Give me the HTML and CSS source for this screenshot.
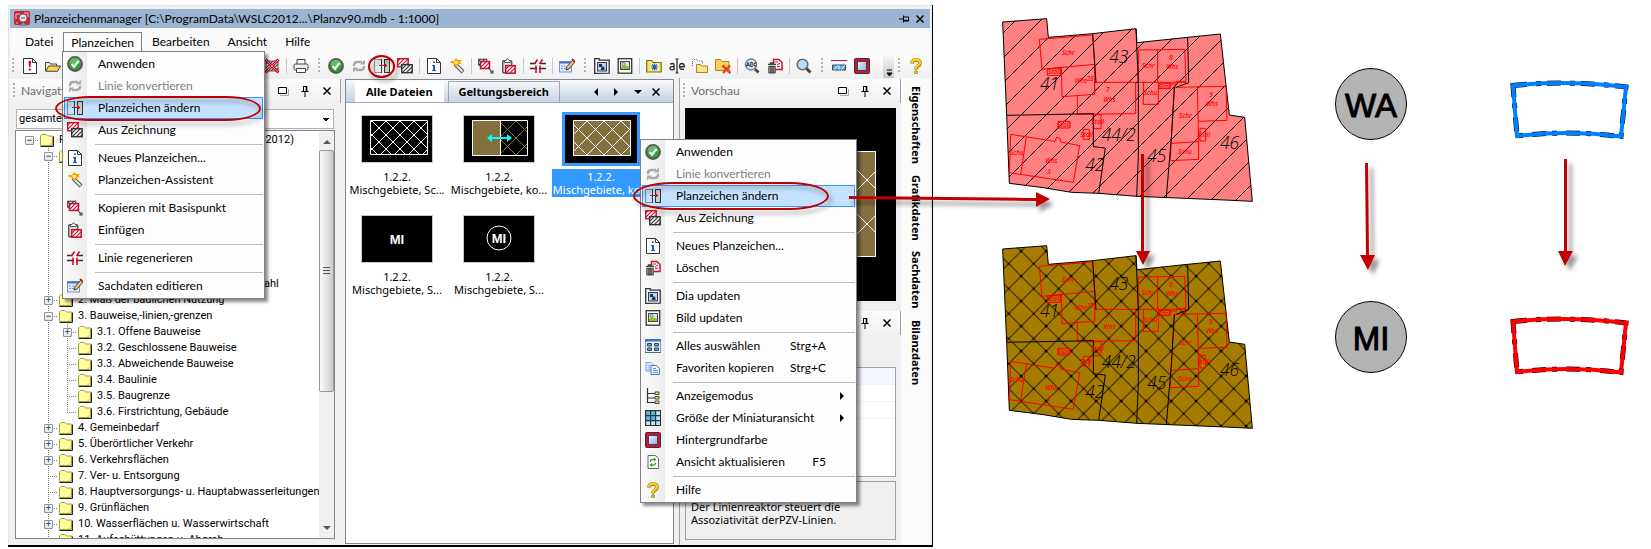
FILE: index.html
```html
<!DOCTYPE html>
<html lang="de">
<head>
<meta charset="utf-8">
<title>Planzeichenmanager</title>
<link rel="stylesheet" href="styles.css">
</head>
<body>
<svg class="defs" aria-hidden="true">
<defs>
<linearGradient id="g-blue" x1="0" y1="0" x2="1" y2="1"><stop offset="0" stop-color="#e8f4ff"/><stop offset="1" stop-color="#7fb2e8"/></linearGradient>
<pattern id="p-red" width="4" height="4" patternUnits="userSpaceOnUse"><rect width="4" height="4" fill="#fff"/><path d="M-1 1L1-1M0 4L4 0M3 5L5 3" stroke="#c8102e" stroke-width="1.200"/></pattern>
<pattern id="p-dark" width="4" height="4" patternUnits="userSpaceOnUse"><rect width="4" height="4" fill="#fff"/><path d="M-1 1L1-1M0 4L4 0M3 5L5 3" stroke="#333" stroke-width="1.200"/></pattern>
<filter id="shadow" x="-100%" y="-30%" width="400%" height="180%"><feDropShadow dx="5" dy="5" stdDeviation="2" flood-color="#000" flood-opacity=".4"/></filter>
<filter id="shadow-h" filterUnits="userSpaceOnUse" x="-5" y="-5" width="230" height="50"><feDropShadow dx="4" dy="5" stdDeviation="2" flood-color="#000" flood-opacity=".4"/></filter>
</defs>
<symbol id="i-check" viewBox="0 0 16 16"><circle cx="8" cy="8" r="7" fill="#2f9e35" stroke="#555" stroke-width="1.8"/><path d="M2.5 7A5.5 5.5 0 0 1 13.500 7Q8 9 2.500 7" fill="#7fd083" opacity=".6"/><path d="M4.500 8l2.500 2.700L11.500 5" fill="none" stroke="#fff" stroke-width="2.200"/></symbol>
<symbol id="i-sync" viewBox="0 0 16 16"><g fill="none" stroke="#aaa" stroke-width="2.400"><path d="M3 8V6.500Q3.500 4 6.500 4H11"/><path d="M13 8v1.500Q12.500 12 9.500 12H5"/></g><path d="M9 6.500h5V1.500zM7 9.500H2v5z" fill="#aaa"/></symbol>
<symbol id="i-change" viewBox="0 0 16 16"><path d="M6.500 1.500H.5v13h6" fill="none" stroke="#333" stroke-dasharray="1 1"/><path d="M7.500 1v14" stroke="#333"/><rect x="10.500" y="1.500" width="5" height="13" fill="#ccc" stroke="#333"/><path d="M5 7.500h7" stroke="#c8102e"/><path d="M11 5.500L13.500 7.500 11 9.500z" fill="#c8102e"/></symbol>
<symbol id="i-copyhatch" viewBox="0 0 16 16"><rect x=".7" y=".7" width="10.500" height="8" fill="url(#p-red)" stroke="#c8102e" stroke-width="1.400"/><rect x="4.700" y="6.700" width="10.500" height="8" fill="url(#p-dark)" stroke="#333" stroke-width="1.400"/></symbol>
<symbol id="i-info" viewBox="0 0 16 16"><path d="M1.500.5h9l4 4v11h-13z" fill="#fff" stroke="#333"/><path d="M10.500.5v4h4" fill="none" stroke="#333"/><path d="M7 3.500h2V5H7zM6 7h3v5h1v1H6v-1h1V8H6z" fill="#1f5fc8"/></symbol>
<symbol id="i-new" viewBox="0 0 16 16"><path d="M1.500.5h9l4 4v11h-13z" fill="#fff" stroke="#333"/><path d="M10.500.5v4h4" fill="none" stroke="#333"/><path d="M6.500 3h2.500l-.5 6H7zM6.800 10.500h2v2h-2z" fill="#d00020"/></symbol>
<symbol id="i-wand" viewBox="0 0 16 16"><path d="M6 6l8 8" stroke="#555" stroke-width="4"/><path d="M6.500 6.500L13.500 13.500" stroke="#eed" stroke-width="2"/><path d="M1 3h4L7 0l2 2h4l-2 2.500 3 .5-4 1-2 3-2-3-4-1z" fill="#f8a400"/><path d="M5 3h4v3H6z" fill="#ffe070"/></symbol>
<symbol id="i-base" viewBox="0 0 16 16"><rect x=".7" y="1.200" width="8" height="6" fill="url(#p-dark)" stroke="#333"/><rect x="2.500" y="3.500" width="9" height="7" fill="url(#p-red)" stroke="#c8102e" stroke-width="1.500"/><path d="M10.500 10l3 3.500" stroke="#333"/><rect x="13" y="13" width="2" height="2" fill="#fff" stroke="#333"/></symbol>
<symbol id="i-paste" viewBox="0 0 16 16"><rect x="1.700" y="2.700" width="9" height="12" rx="1" fill="#ddd" stroke="#555" stroke-width="1.400"/><path d="M3.500 4.500V2.500H5A1.400 1.400 0 0 1 8 2.500h1.200v2z" fill="#fff" stroke="#555"/><rect x="4.700" y="7.700" width="9.500" height="7.500" fill="url(#p-red)" stroke="#c8102e" stroke-width="1.500"/></symbol>
<symbol id="i-regen" viewBox="0 0 16 16"><path d="M0 5.500h16M0 10.500h16" stroke="#333" stroke-width="1.300"/><path d="M5.500 4h5v3h-5zM4.500 9h1v3h-1zM7 9h2v3H7zM11 9h1v3h-1z" fill="#fff"/><path d="M4.500 6L7.500 1.500M9.500 6L12.500 1.500M4 10.500h3M9 10.500h3M6 7.500v7.500M10 7.500v7.500" stroke="#d00020" stroke-width="1.500"/></symbol>
<symbol id="i-edit" viewBox="0 0 16 16"><rect x=".5" y="3.500" width="12" height="10.500" fill="#dfeaff" stroke="#7a90c8"/><path d="M.5 3.500h12v2H.5z" fill="#4a70c8"/><path d="M2 8h5M2 10.500h5" stroke="#6f92dd" stroke-dasharray="2 1"/><path d="M7 12l1-3.500L14 2l2 2-6 7z" fill="#f0c070" stroke="#444"/><path d="M13 1l2.500 2.500" stroke="#a33" stroke-width="2"/></symbol>
<symbol id="i-trash" viewBox="0 0 16 16"><path d="M6.500 6V1.500H12l3 3v7H9" fill="#fff" stroke="#c8102e" stroke-width="1.500"/><path d="M8 4h3M10 7l3-2M10 9l3-1" stroke="#c8102e"/><path d="M1 6.500h8M3.500 6V5h3v1" fill="none" stroke="#444" stroke-width="1.500"/><path d="M1.800 8.500h6.500v6.500H1.800z" fill="#999" stroke="#444"/><path d="M4 9v6M6 9v6" stroke="#333"/></symbol>
<symbol id="i-dia" viewBox="0 0 16 16"><path d="M.7 15.300V.7h4.500v1.500h10v13z" fill="#f8f8f8" stroke="#333" stroke-width="1.300"/><rect x="3.500" y="4.500" width="9" height="8.500" fill="#b5d4f5" stroke="#335"/><path d="M5 6h3v3H5zM7 12V10l2-2 1.500 2v2z" fill="#234"/></symbol>
<symbol id="i-bild" viewBox="0 0 16 16"><rect x="1.200" y=".7" width="13.500" height="14.500" fill="#fff" stroke="#333" stroke-width="1.300"/><rect x="3.500" y="3.500" width="9" height="8" fill="#cfe6f8" stroke="#444"/><path d="M4 11V9q4-3 8 0v2z" fill="#8cc020"/><circle cx="6.500" cy="6" r="1.500" fill="#f5e55c" stroke="#555" stroke-width=".7"/></symbol>
<symbol id="i-all" viewBox="0 0 16 16"><rect x=".5" y="1.500" width="15" height="13" fill="#eaf2ff" stroke="#7a96d8"/><path d="M0 1h16v2.500H0z" fill="#3f6ee0"/><path d="M0 14h16v1H0z" fill="#567"/><g fill="#7fa2c8" stroke="#345"><path d="M2.500 5.500h4v2.500h-4zM9.500 5.500h4v2.500h-4zM2.500 10h4v2.500h-4zM9.500 10h4v2.500h-4z"/></g></symbol>
<symbol id="i-copy" viewBox="0 0 16 16"><path d="M1 2.500h5l3 3v5.500H1z" fill="#eaf2ff" stroke="#7f9fd8"/><path d="M2.500 5h3M2.500 7h4M2.500 9h3" stroke="#88a8e0"/><path d="M6 5.500h5.500l3 3v6H6z" fill="#eaf2ff" stroke="#4f78c8"/><path d="M8 8.500h3M8 10.500h5M8 12.500h5" stroke="#6f92d8"/></symbol>
<symbol id="i-mode" viewBox="0 0 16 16"><path d="M2.500 0v14.500h8M2.500 5.500h8M2.500 10h8" fill="none" stroke="#333" stroke-width="1.200"/><path d="M10 4h4v2.500h-4zM10 8.500h4V11h-4zM10 13h4v2.500h-4z" fill="#ffe87a" stroke="#444"/></symbol>
<symbol id="i-grid" viewBox="0 0 16 16"><path d="M0 0h16v16H0z" fill="#333"/><path d="M1.200 1.200h3.800V5H1.200zM6.200 1.200H10V5H6.200zM1.200 6.200H5V10H1.200zM6.200 6.200H10V10H6.200z" fill="#53b9e8"/><path d="M11.200 1.200H15V5h-3.800zM11.200 6.200H15V10h-3.800zM1.200 11.200H5V15H1.200zM6.200 11.200H10V15H6.200zM11.200 11.200H15V15h-3.800z" fill="#b9e3f8"/></symbol>
<symbol id="i-bg" viewBox="0 0 16 16"><rect x=".5" y=".5" width="15" height="15" rx="1" fill="#d0103a" stroke="#333"/><rect x="3.500" y="3.500" width="9" height="9" fill="url(#g-blue)" stroke="#444"/></symbol>
<symbol id="i-refresh" viewBox="0 0 16 16"><path d="M3 1.500h7.500l3 3v10H3z" fill="#fff" stroke="#667"/><path d="M5.500 8V7q0-1.500 2-1.500h2M10.500 8.500v1q0 1.500-2 1.500h-2" fill="none" stroke="#3f9a28" stroke-width="1.300"/><path d="M9 3.500v4l2.500-2zM7 9v4l-2.500-2z" fill="#3f9a28"/></symbol>
<symbol id="i-help" viewBox="0 0 16 16"><path d="M4 5.500Q4 2 8 2t4 3q0 1.800-2 3T8 11.500" fill="none" stroke="#8a6d10" stroke-width="3.600"/><path d="M4 5Q4 1.700 8 1.700t4 3q0 1.800-2.200 3T7.800 11" fill="none" stroke="#fccb1a" stroke-width="2.400"/><circle cx="8" cy="14.300" r="1.600" fill="#fccb1a" stroke="#8a6d10" stroke-width=".8"/></symbol>
<symbol id="i-open" viewBox="0 0 16 16"><path d="M.5 13V4.500h4l1 1.500h6v2" fill="#fff2b0" stroke="#444"/><path d="M.7 13.300l3-5.300H15.500l-3 5.300z" fill="#fbd252" stroke="#444"/></symbol>
<symbol id="i-del" viewBox="0 0 16 16"><rect x="2" y="3" width="12" height="10" fill="url(#p-dark)" stroke="#555"/><path d="M1.500 1.500l13 13M14.500 1.500l-13 13" stroke="#c8102e" stroke-width="3"/><path d="M1.500 1.500l13 13M14.500 1.500l-13 13" stroke="#ee8a96" stroke-width="1"/></symbol>
<symbol id="i-print" viewBox="0 0 16 16"><path d="M4 6V1.500h8V6" fill="#fff" stroke="#444"/><rect x="1" y="6" width="14" height="6" rx="1.500" fill="#eee" stroke="#444"/><path d="M3.500 10.500h9v4h-9z" fill="#fff" stroke="#444"/></symbol>
<symbol id="i-fnew" viewBox="0 0 16 16"><path d="M.7 14V2.500h5l1.500 2h8V14z" fill="#fbe36a" stroke="#806a10" stroke-width="1.200"/><path d="M4.500 5.500h8v7h-8z" fill="#fff6b5"/><path d="M8.500 5.500v7M5 9h7M6 6.500l5 5M11 6.500l-5 5" stroke="#1f5fc8" stroke-width="1.200"/></symbol>
<symbol id="i-rename" viewBox="0 0 16 16"><path d="M8 1v14M6.500 1h3M6.500 15h3" stroke="#222" stroke-width="1.200"/><g fill="none" stroke="#333" stroke-width="1.400"><path d="M1 6q4-1.500 4 1v5M5 8.500q-4-.3-4 1.800t4 1"/><path d="M10.500 8.800h4.800q0-3.300-2.400-3.300t-2.400 3q0 3.500 4.500 2.800"/></g></symbol>
<symbol id="i-fmove" viewBox="0 0 16 16"><path d="M.5 8V1.500h4l1 1.500h5v3" fill="none" stroke="#666" stroke-dasharray="1 1"/><path d="M4.500 14.500V6.500h4l1 1.500h6v6.500z" fill="#fbe08a" stroke="#a8842a"/></symbol>
<symbol id="i-fdel" viewBox="0 0 16 16"><path d="M.5 12.500V1.500h5l1.500 2h7v9z" fill="#fbd05a" stroke="#b08420"/><path d="M7.500 7.500l8 7.500M15 7.500l-7 7.500" stroke="#e8401c" stroke-width="2.400"/></symbol>
<symbol id="i-abc" viewBox="0 0 16 16"><circle cx="7" cy="6.500" r="5.500" fill="#cfe5fa" stroke="#777" stroke-width="1.300"/><path d="M11 11l3.500 3.500" stroke="#444" stroke-width="2.600"/><path d="M2.500 8.500l1.500-4 1.500 4M3 7.300h2M6.800 8.500v-4h1.500q1 1 0 2 1.500 1 0 2zM12.500 5q-2.500-1-2.500 1.500T12.500 8" fill="none" stroke="#234"/></symbol>
<symbol id="i-mag" viewBox="0 0 16 16"><circle cx="6.500" cy="6.500" r="5.300" fill="#b9dbf8" stroke="#667" stroke-width="1.600"/><path d="M10.500 10.500l4 4" stroke="#444" stroke-width="3"/></symbol>
<symbol id="i-ruler" viewBox="0 0 16 16"><path d="M0 2.500h16" stroke="#c8102e"/><path d="M1.500 7h13v5h-13z" fill="#49b4ee" stroke="#444"/><path d="M8 7.500v4M3.500 11.500l3-4M10.500 11.500l3-4" stroke="#fff"/></symbol>
<symbol id="i-logo" viewBox="0 0 16 16"><rect width="16" height="14" rx="2" fill="#c8253a"/><path d="M2 8V3h4M10 2h4v4M2 12h2" fill="none" stroke="#f4c5ca"/><circle cx="9" cy="7" r="4" fill="#e8e8e8" stroke="#666"/><path d="M6 15l3-4 4 4z" fill="#888"/><path d="M7 7h4" stroke="#555"/></symbol>
<symbol id="i-folder" viewBox="0 0 14 14"><path d="M.5 12.500V3L2 1.500h4L7.500 3h5v9.500z" fill="#ffff9c" stroke="#a0a040"/><path d="M7 12q4-1 5-6v6z" fill="#fbd9a0"/><path d="M.5 13.500h13V3.500" fill="none" stroke="#222"/></symbol>
<symbol id="i-float" viewBox="0 0 12 12"><path d="M1.500 2.500h8v6h-8z" fill="none" stroke="#000"/><path d="M11.500 4v6.500H3" fill="none" stroke="#aaa"/></symbol>
<symbol id="i-pin" viewBox="0 0 12 12"><path d="M4.500 1v5.500M2.500 6.500h7M6 7v5M4 1.500h4" fill="none" stroke="#000"/><path d="M7.500 1v5.500" stroke="#000" stroke-width="1.600"/></symbol>
<symbol id="i-pinh" viewBox="0 0 12 12"><path d="M1 6h4M5.500 2.500v7M5.500 4h5v4" fill="none" stroke="#000"/><path d="M5.500 7.700h5.500" stroke="#000" stroke-width="1.600"/></symbol>
<symbol id="i-x" viewBox="0 0 12 12"><path d="M2.500 2.500l7 7M9.500 2.500l-7 7" stroke="#000" stroke-width="1.500"/></symbol>
</svg>

<main class="page">
<section class="window">
  <header class="title">
    <svg class="ic"><use href="#i-logo"/></svg>
    <h1>Planzeichenmanager [C:\ProgramData\WSLC2012...\Planzv90.mdb - 1:1000]</h1>
    <button aria-label="Anheften"><svg class="ic12"><use href="#i-pinh"/></svg></button>
    <button aria-label="Fenster schließen"><svg class="ic12"><use href="#i-x"/></svg></button>
  </header>

  <nav class="menubar">
    <button>Datei</button><button class="open">Planzeichen</button><button>Bearbeiten</button><button>Ansicht</button><button>Hilfe</button>
    <ul class="menu menu-main">
      <li><button><svg class="ic"><use href="#i-check"/></svg><span>Anwenden</span></button></li>
      <li><button disabled><svg class="ic"><use href="#i-sync"/></svg><span>Linie konvertieren</span></button></li>
      <li class="hot"><button><svg class="ic"><use href="#i-change"/></svg><span>Planzeichen ändern</span></button><i class="ring"></i></li>
      <li><button><svg class="ic"><use href="#i-copyhatch"/></svg><span>Aus Zeichnung</span></button></li>
      <li class="line"></li>
      <li><button><svg class="ic"><use href="#i-info"/></svg><span>Neues Planzeichen...</span></button></li>
      <li><button><svg class="ic"><use href="#i-wand"/></svg><span>Planzeichen-Assistent</span></button></li>
      <li class="line"></li>
      <li><button><svg class="ic"><use href="#i-base"/></svg><span>Kopieren mit Basispunkt</span></button></li>
      <li><button><svg class="ic"><use href="#i-paste"/></svg><span>Einfügen</span></button></li>
      <li class="line"></li>
      <li><button><svg class="ic"><use href="#i-regen"/></svg><span>Linie regenerieren</span></button></li>
      <li class="line"></li>
      <li><button><svg class="ic"><use href="#i-edit"/></svg><span>Sachdaten editieren</span></button></li>
    </ul>
  </nav>

  <div class="toolbar">
    <i class="grip first"></i>
    <button aria-label="Neu"><svg class="ic"><use href="#i-new"/></svg></button>
    <button aria-label="Öffnen"><svg class="ic"><use href="#i-open"/></svg></button>
    <i class="covered"></i>
    <button aria-label="Entfernen"><svg class="ic"><use href="#i-del"/></svg></button>
    <i class="sep"></i>
    <button aria-label="Drucken"><svg class="ic"><use href="#i-print"/></svg></button>
    <i class="grip"></i>
    <button aria-label="Anwenden"><svg class="ic"><use href="#i-check"/></svg></button>
    <button aria-label="Linie konvertieren"><svg class="ic"><use href="#i-sync"/></svg></button>
    <button aria-label="Planzeichen ändern" class="marked"><svg class="ic"><use href="#i-change"/></svg><i class="ring"></i></button>
    <button aria-label="Aus Zeichnung"><svg class="ic"><use href="#i-copyhatch"/></svg></button>
    <i class="sep"></i>
    <button aria-label="Neues Planzeichen"><svg class="ic"><use href="#i-info"/></svg></button>
    <button aria-label="Assistent"><svg class="ic"><use href="#i-wand"/></svg></button>
    <i class="sep"></i>
    <button aria-label="Kopieren mit Basispunkt"><svg class="ic"><use href="#i-base"/></svg></button>
    <button aria-label="Einfügen"><svg class="ic"><use href="#i-paste"/></svg></button>
    <i class="sep"></i>
    <button aria-label="Linie regenerieren"><svg class="ic"><use href="#i-regen"/></svg></button>
    <i class="sep"></i>
    <button aria-label="Sachdaten editieren"><svg class="ic"><use href="#i-edit"/></svg></button>
    <i class="grip"></i>
    <button aria-label="Dia updaten"><svg class="ic"><use href="#i-dia"/></svg></button>
    <button aria-label="Bild updaten"><svg class="ic"><use href="#i-bild"/></svg></button>
    <i class="sep"></i>
    <button aria-label="Neuer Ordner"><svg class="ic"><use href="#i-fnew"/></svg></button>
    <button aria-label="Umbenennen"><svg class="ic"><use href="#i-rename"/></svg></button>
    <button aria-label="Ordner verschieben"><svg class="ic"><use href="#i-fmove"/></svg></button>
    <button aria-label="Ordner löschen"><svg class="ic"><use href="#i-fdel"/></svg></button>
    <i class="sep"></i>
    <button aria-label="Text suchen"><svg class="ic"><use href="#i-abc"/></svg></button>
    <button aria-label="Löschen"><svg class="ic"><use href="#i-trash"/></svg></button>
    <i class="sep"></i>
    <button aria-label="Suchen"><svg class="ic"><use href="#i-mag"/></svg></button>
    <i class="grip"></i>
    <button aria-label="Miniaturansicht"><svg class="ic"><use href="#i-ruler"/></svg></button>
    <button aria-label="Hintergrundfarbe"><svg class="ic"><use href="#i-bg"/></svg></button>
    <button aria-label="Weitere Symbole" class="more"><svg viewBox="0 0 10 24"><path d="M3 16h5M3 19h5L5.500 22z" stroke="#000" fill="#000"/></svg></button>
    <i class="grip"></i>
    <button aria-label="Hilfe"><svg class="ic"><use href="#i-help"/></svg></button>
  </div>

  <div class="panes">
    <section class="nav">
      <header class="phead"><i class="grip"></i><h2>Navigation</h2><svg class="ic12"><use href="#i-float"/></svg><svg class="ic12"><use href="#i-pin"/></svg><svg class="ic12"><use href="#i-x"/></svg></header>
      <select aria-label="Bereich"><option>gesamte</option></select>
      <div class="treebox">
        <ul class="tree">
          <li><i class="g h"><b>−</b></i><svg class="fo"><use href="#i-folder"/></svg><span class="root"><span>P</span><span>2012)</span></span></li>
          <li><i class="g"></i><i class="g h v"><b>−</b></i><svg class="fo"><use href="#i-folder"/></svg></li>
          <li><i class="g"></i><i class="g v"></i></li>
          <li><i class="g"></i><i class="g v"></i></li>
          <li><i class="g"></i><i class="g v"></i></li>
          <li><i class="g"></i><i class="g v"></i></li>
          <li><i class="g"></i><i class="g v"></i></li>
          <li><i class="g"></i><i class="g v"></i></li>
          <li><i class="g"></i><i class="g v"></i></li>
          <li><i class="g"></i><i class="g v"></i><span class="tail">ahl</span></li>
          <li><i class="g"></i><i class="g h v"><b>+</b></i><svg class="fo"><use href="#i-folder"/></svg><span>2. Maß der baulichen Nutzung</span></li>
          <li><i class="g"></i><i class="g h v"><b>−</b></i><svg class="fo"><use href="#i-folder"/></svg><span>3. Bauweise,-linien,-grenzen</span></li>
          <li><i class="g"></i><i class="g v"></i><i class="g h v"><b>+</b></i><svg class="fo"><use href="#i-folder"/></svg><span>3.1. Offene Bauweise</span></li>
          <li><i class="g"></i><i class="g v"></i><i class="g h v"></i><svg class="fo"><use href="#i-folder"/></svg><span>3.2. Geschlossene Bauweise</span></li>
          <li><i class="g"></i><i class="g v"></i><i class="g h v"></i><svg class="fo"><use href="#i-folder"/></svg><span>3.3. Abweichende Bauweise</span></li>
          <li><i class="g"></i><i class="g v"></i><i class="g h v"></i><svg class="fo"><use href="#i-folder"/></svg><span>3.4. Baulinie</span></li>
          <li><i class="g"></i><i class="g v"></i><i class="g h v"></i><svg class="fo"><use href="#i-folder"/></svg><span>3.5. Baugrenze</span></li>
          <li><i class="g"></i><i class="g v"></i><i class="g h v up"></i><svg class="fo"><use href="#i-folder"/></svg><span>3.6. Firstrichtung, Gebäude</span></li>
          <li><i class="g"></i><i class="g h v"><b>+</b></i><svg class="fo"><use href="#i-folder"/></svg><span>4. Gemeinbedarf</span></li>
          <li><i class="g"></i><i class="g h v"><b>+</b></i><svg class="fo"><use href="#i-folder"/></svg><span>5. Überörtlicher Verkehr</span></li>
          <li><i class="g"></i><i class="g h v"><b>+</b></i><svg class="fo"><use href="#i-folder"/></svg><span>6. Verkehrsflächen</span></li>
          <li><i class="g"></i><i class="g h v"></i><svg class="fo"><use href="#i-folder"/></svg><span>7. Ver- u. Entsorgung</span></li>
          <li><i class="g"></i><i class="g h v"></i><svg class="fo"><use href="#i-folder"/></svg><span>8. Hauptversorgungs- u. Hauptabwasserleitungen</span></li>
          <li><i class="g"></i><i class="g h v"><b>+</b></i><svg class="fo"><use href="#i-folder"/></svg><span>9. Grünflächen</span></li>
          <li><i class="g"></i><i class="g h v"><b>+</b></i><svg class="fo"><use href="#i-folder"/></svg><span>10. Wasserflächen u. Wasserwirtschaft</span></li>
          <li><i class="g"></i><i class="g h v"></i><svg class="fo"><use href="#i-folder"/></svg><span>11. Aufschüttungen u. Abgrab.</span></li>
        </ul>
        <div class="scroll"><i class="au"></i><i class="thumb"></i><i class="ad"></i></div>
      </div>
    </section>

    <section class="files">
      <header class="tabs">
        <button class="tab on">Alle Dateien</button><button class="tab">Geltungsbereich</button>
        <span class="tabtools"><i class="tl"></i><i class="tr"></i><i class="td"></i><svg class="ic12"><use href="#i-x"/></svg></span>
      </header>
      <ul class="thumbs">
        <li><svg class="pic" viewBox="0 0 72 48"><defs><pattern id="lat" x="4" y="-1" width="14" height="14" patternUnits="userSpaceOnUse"><path d="M0 0l14 14M14 0L0 14" stroke="#fff"/></pattern></defs><path d="M9.500 5.500h57v34h-57z" fill="url(#lat)" stroke="#fff"/></svg><span>1.2.2.<br>Mischgebiete, Sc...</span></li>
        <li><svg class="pic" viewBox="0 0 72 48"><defs><pattern id="lat2" x="2" y="6" width="17" height="17" patternUnits="userSpaceOnUse"><path d="M0 0l17 17M17 0L0 17" stroke="#84703f"/></pattern></defs><path d="M37 5h28v36H37z" fill="url(#lat2)"/><path d="M9 5h28v36H9z" fill="#84703f"/><path d="M9.500 5.500h55v35h-55zM37.500 5v36" fill="none" stroke="#fff"/><path d="M24 23l5-4v3h15v-3l5 4-5 4v-3H29v3z" fill="#0ff"/></svg><span>1.2.2.<br>Mischgebiete, ko...</span></li>
        <li class="sel"><svg class="pic" viewBox="0 0 72 48"><defs><pattern id="lat3" x="5" y="6" width="17" height="17" patternUnits="userSpaceOnUse"><path d="M0 0l17 17M17 0L0 17" stroke="#fff"/></pattern></defs><path d="M8 5h58v35H8z" fill="#84703f"/><path d="M8.500 5.500h57v35h-57z" fill="url(#lat3)" stroke="#fff"/></svg><span>1.2.2.<br>Mischgebiete, ko...</span></li>
        <li><svg class="pic" viewBox="0 0 72 48"><text x="36" y="29" class="mi">MI</text></svg><span>1.2.2.<br>Mischgebiete, S...</span></li>
        <li><svg class="pic" viewBox="0 0 72 48"><circle cx="36" cy="23" r="12" fill="none" stroke="#fff"/><text x="36" y="28" class="mi">MI</text></svg><span>1.2.2.<br>Mischgebiete, S...</span></li>
      </ul>
    </section>

    <section class="right">
      <header class="phead"><i class="grip"></i><h2>Vorschau</h2><svg class="ic12"><use href="#i-float"/></svg><svg class="ic12"><use href="#i-pin"/></svg><svg class="ic12"><use href="#i-x"/></svg></header>
      <svg class="preview" viewBox="0 0 211 193" preserveAspectRatio="xMidYMid meet"><defs><pattern id="lat4" x="160" y="50" width="44" height="44" patternUnits="userSpaceOnUse"><path d="M0 0l44 44M44 0L0 44" stroke="#fff"/></pattern></defs><path d="M21 43h170v106H21z" fill="#84703f"/><path d="M20.500 43.500h170v105h-170z" fill="url(#lat4)" stroke="#fff"/></svg>
      <header class="phead second"><i class="grip"></i><svg class="ic12"><use href="#i-pin"/></svg><svg class="ic12"><use href="#i-x"/></svg></header>
      <div class="props"><i></i><i></i><i></i></div>
      <p class="desc">Der Linienreaktor steuert die<br>Assoziativität derPZV-Linien.</p>
    </section>

    <aside class="side"><button>Eigenschaften</button><button>Grafikdaten</button><button>Sachdaten</button><button>Bilanzdaten</button></aside>
  </div>

  <ul class="menu menu-context">
    <li><button><svg class="ic"><use href="#i-check"/></svg><span>Anwenden</span></button></li>
    <li><button disabled><svg class="ic"><use href="#i-sync"/></svg><span>Linie konvertieren</span></button></li>
    <li class="hot"><button><svg class="ic"><use href="#i-change"/></svg><span>Planzeichen ändern</span></button><i class="ring"></i>
      <svg class="pointer" viewBox="0 0 210 30"><g filter="url(#shadow-h)" fill="#c00000"><path d="M0 10l188 2v3L0 13zM187 6l14 7-14 8z"/></g></svg></li>
    <li><button><svg class="ic"><use href="#i-copyhatch"/></svg><span>Aus Zeichnung</span></button></li>
    <li class="line"></li>
    <li><button><svg class="ic"><use href="#i-info"/></svg><span>Neues Planzeichen...</span></button></li>
    <li><button><svg class="ic"><use href="#i-trash"/></svg><span>Löschen</span></button></li>
    <li class="line"></li>
    <li><button><svg class="ic"><use href="#i-dia"/></svg><span>Dia updaten</span></button></li>
    <li><button><svg class="ic"><use href="#i-bild"/></svg><span>Bild updaten</span></button></li>
    <li class="line"></li>
    <li><button><svg class="ic"><use href="#i-all"/></svg><span>Alles auswählen</span><kbd>Strg+A</kbd></button></li>
    <li><button><svg class="ic"><use href="#i-copy"/></svg><span>Favoriten kopieren</span><kbd>Strg+C</kbd></button></li>
    <li class="line"></li>
    <li class="sub"><button><svg class="ic"><use href="#i-mode"/></svg><span>Anzeigemodus</span></button></li>
    <li class="sub"><button><svg class="ic"><use href="#i-grid"/></svg><span>Größe der Miniaturansicht</span></button></li>
    <li><button><svg class="ic"><use href="#i-bg"/></svg><span>Hintergrundfarbe</span></button></li>
    <li><button><svg class="ic"><use href="#i-refresh"/></svg><span>Ansicht aktualisieren</span><kbd>F5</kbd></button></li>
    <li class="line"></li>
    <li><button><svg class="ic"><use href="#i-help"/></svg><span>Hilfe</span></button></li>
  </ul>
</section>

<svg class="canvas" viewBox="933 5 718 542" preserveAspectRatio="xMinYMin meet">
  <defs>
    <path id="outline" d="M38 66L170 56 175 112 308 101 438 86 441 128 593 112 691 102 718 345 764 352 787 604 705 600 441 589 326 580 244 577 160 563 58 550 50 346z"/>
    <pattern id="hatch" x="63" y="0" width="75" height="75" patternUnits="userSpaceOnUse"><path d="M-2 77L77-2" stroke="#000" stroke-width="3"/></pattern>
    <pattern id="cross" x="56" y="35" width="75" height="75" patternUnits="userSpaceOnUse"><path d="M-2 77L77-2M-2-2L77 77" stroke="#000" stroke-width="3"/><circle cx="37" cy="37" r="4"/><circle r="4"/><circle cx="75" r="4"/><circle cy="75" r="4"/><circle cx="75" cy="75" r="4"/></pattern>
    <g id="parcels">
      <g fill="none" stroke="#f00" stroke-width="3">
        <path d="M148 118L308 105 314 193 156 208zM214 200L216 290 314 283V193M172 206h40v20h-40zM192 204h20M262 287V343L437 341V247H314V283"/>
        <path d="M445 150L584 148 588 247H445zM503 150V247M460 247V313H505V247M507 250h33v16h-33zM540 252h20v-8h28"/>
        <path d="M553 262L545 400 541 482 626 478V425L545 430M553 262L708 259 711 361 626 364M622 260L626 425M630 385h17v38h-17z"/>
        <path d="M62 403L195 424 200 412 210 415 212 426 269 437 250 547 58 518zM109 411L92 523M204 364h36v20h-36zM280 388h18v30h-18zM310 344h23v42h-23z"/>
      </g>
      <path d="M308 101L318 248M438 86L445 250V470L440 589M50 346L310 341V440L346 444 326 580M593 112L596 248 558 262M553 262L545 400 529 592M437 247H445" fill="none" stroke="#000" stroke-width="3"/>
      <g class="small">
        <text x="216" y="164">Schr</text><text x="174" y="223">Stall</text><text x="254" y="248">Whs</text><text x="290" y="243">25</text><text x="348" y="276">7</text><text x="340" y="305">Whs</text><text x="202" y="382">Stall</text><text x="271" y="411">Stall</text><text x="304" y="372">Stall</text><text x="60" y="466">Schu</text><text x="166" y="488">Whs</text><text x="171" y="521">3</text><text x="456" y="204">Schr</text><text x="528" y="206">Whs</text><text x="538" y="180">8</text><text x="461" y="286">Schu</text><text x="506" y="266">Stall</text><text x="658" y="290">9</text><text x="648" y="318">Whs</text><text x="567" y="353">Schr</text><text x="565" y="462">Schu</text><text x="622" y="412">Stall</text>
      </g>
      <g class="big">
        <text x="358" y="190">43</text><text x="150" y="270">41</text><text x="335" y="422">44/2</text><text x="286" y="512">42</text><text x="472" y="485">45</text><text x="690" y="447">46</text>
      </g>
    </g>
    <path id="field" d="M1513 85.500Q1568 80 1626 87L1621 136.500Q1568 130 1517 136z" fill="none"/>
  </defs>
  <svg x="990" y="0" width="280" height="220" viewBox="0 0 840 660"><use href="#outline" fill="#ff8080"/><use href="#outline" fill="url(#hatch)" stroke="#000" stroke-width="3"/><use href="#parcels"/></svg>
  <svg x="990" y="227" width="280" height="220" viewBox="0 0 840 660"><use href="#outline" fill="#a57c00"/><use href="#outline" fill="url(#cross)" stroke="#000" stroke-width="3"/><use href="#parcels"/></svg>
  <g fill="#b4b4b4" stroke="#000"><circle cx="1371" cy="104" r="35.500"/><circle cx="1371" cy="337" r="35.500"/></g>
  <text x="1371" y="117" class="code">WA</text>
  <text x="1371" y="350" class="code">MI</text>
  <use href="#field" stroke="#000" stroke-width="5" stroke-dasharray="14 9 5 6"/><use href="#field" stroke="#0080ff" stroke-width="4"/>
  <g transform="translate(0 236)"><use href="#field" stroke="#000" stroke-width="5" stroke-dasharray="14 9 5 6"/><use href="#field" stroke="#f00" stroke-width="4"/></g>
  <path class="arrow" d="M1141 154h3v97h6l-7 14-7-14h5z"/>
  <path class="arrow" d="M1365 163h3l1 92h6l-7 15-8-15h6z"/>
  <path class="arrow" d="M1564 159h3v92h6l-8 15-7-15h6z"/>
</svg>
</main>
</body>
</html>
```

FILE: styles.css
```css
* { box-sizing: border-box; }
body { margin: 0; background: #fff; font: 12px/16px Lato, "Open Sans", sans-serif; color: #000; }
h1, h2, p, ul { margin: 0; padding: 0; font: inherit; list-style: none; }
button { margin: 0; padding: 0; border: 0; background: none; font: inherit; color: inherit; white-space: nowrap; }
i { font-style: normal; }
.defs { position: absolute; width: 0; height: 0; }
.ic { width: 16px; height: 16px; flex: none; display: block; }
.ic12 { width: 12px; height: 12px; flex: none; display: block; }

.page { display: grid; grid-template-columns: minmax(0, 925fr) minmax(0, 718fr); height: 100vh; padding: 5px 0 2px 8px; }
.window { position: relative; display: flex; flex-direction: column; min-height: 0; padding: 4px 2px 0; background: #f0f0f0; border: solid #000; border-width: 0 1px 2px 0; box-shadow: inset 1px 1px #e4e4e4; }
.canvas { width: 100%; height: auto; display: block; }

.title { display: flex; align-items: center; gap: 4px; height: 19px; flex: none; padding: 0 4px; background: #9bb4d2; }
.title h1 { flex: 1; min-width: 0; white-space: nowrap; overflow: hidden; }

.menubar { position: relative; display: flex; align-items: flex-end; gap: 2px; height: 26px; flex: none; padding-left: 7px; background: #fafafa; }
.menubar > button { height: 22px; padding: 0 7px 2px; border: 1px solid transparent; }
.menubar > button.open { background: #fcfcfc; border-color: #808080; border-bottom: 0; }

.menu { position: absolute; z-index: 3; padding: 1px; background: #fdfdfd linear-gradient(90deg, #fbfbfb, #ececec) 0 0 / 24px 100% no-repeat; border: 1px solid #808080; box-shadow: 3px 3px 3px rgba(0, 0, 0, .45); }
.menu-main { left: 52px; top: 23px; width: 203px; }
.menu-context { left: 632px; top: 134px; width: 217px; }
.menu li { position: relative; height: 22px; }
.menu li.line { height: 4px; margin: 0 0 2px 31px; border-bottom: 1px solid #bdbdbd; }
.menu button { display: flex; align-items: center; width: 100%; height: 22px; padding: 0 28px 0 4px; border: 1px solid transparent; }
.menu button span { margin-left: 13px; flex: 1; text-align: left; }
.menu button:disabled { color: #808080; }
.menu .hot button { background: #c4e1ff; border-color: #3399ff; }
.menu kbd { font: inherit; }
.menu .sub button::after { content: ""; border: solid transparent; border-width: 4px 0 4px 4px; border-left-color: #000; margin-right: -18px; }
.menu .ic { margin-left: -2px; margin-right: 2px; }
.ring { position: absolute; border: 2px solid #c00000; pointer-events: none; filter: drop-shadow(3px 4px 2px rgba(0, 0, 0, .35)); }
.menu-main .ring { left: -9px; top: -1px; width: 206px; height: 25px; border-radius: 36px / 13px; }
.menu-context .ring { left: -9px; top: -3px; width: 196px; height: 28px; border-radius: 40px / 14px; }
.pointer { position: absolute; left: 207px; top: 1px; width: 210px; height: 30px; overflow: visible; pointer-events: none; }

.toolbar { display: flex; align-items: center; height: 24px; flex: none; background: linear-gradient(#fdfdfd, #efefef); }
.toolbar > button { position: relative; width: 23px; height: 22px; flex: none; display: grid; place-items: center; }
.toolbar .sep { width: 6px; height: 16px; flex: none; background: linear-gradient(#c8c8c8, #c8c8c8) center / 1px 100% no-repeat; }
.grip { flex: none; width: 2px; height: 16px; background: repeating-linear-gradient(#b4b4b4 0 2px, transparent 2px 4px); }
.toolbar .grip { margin: 0 4px 0 6px; }
.toolbar .grip.first { margin: 0 4px 0 2px; }
.covered { width: 196px; flex: none; }
.marked .ring { left: -2px; top: 0; width: 27px; height: 23px; border-radius: 50%; }
.toolbar > .more { width: 11px; height: 24px; margin-left: 10px; margin-right: -2px; background: linear-gradient(#fafafa, #c8c8c8); }
.more svg { width: 10px; height: 24px; }

.panes { flex: 1; min-height: 0; display: grid; grid-template-columns: 331px minmax(0, 1fr) 227px 29px; }
.panes > section { min-height: 0; display: flex; flex-direction: column; }
.phead { display: flex; align-items: center; gap: 10px; height: 24px; flex: none; padding: 0 7px 0 3px; border-right: 1px solid #a0a0a0; background: linear-gradient(#fcfcfc, #f0f0f0); }
.phead h2 { flex: 1; margin-left: -4px; color: #6d6d6d; }

.nav { padding: 1px 0 6px; }
.nav select { appearance: none; margin: 6px 7px 0 6px; height: 20px; border: 1px solid #b4b4b4; border-radius: 0; padding: 0 2px; font: 11px/16px Roboto, Arial, sans-serif; color: #000; background: #fff linear-gradient(135deg, #000 50%, transparent 50%) right 3px top 8px / 4px 4px no-repeat; background-image: linear-gradient(135deg, #000 50%, transparent 50%), linear-gradient(225deg, #000 50%, transparent 50%); background-position: right 3px top 8px, right 7px top 8px; }
.treebox { flex: 1; min-height: 0; display: flex; margin: 1px 6px 0 5px; border: 1px solid #828790; background: #fff; overflow: hidden; }
.tree { flex: 1; padding: 1px 0 0 4px; font: 11px/16px Roboto, Arial, sans-serif; white-space: nowrap; min-width: 0; overflow: hidden; }
.tree li { display: flex; align-items: center; height: 16px; }
.tree li > span { margin-left: 5px; }
.tree .root { display: flex; justify-content: space-between; width: 235px; }
.tree .tail { padding-left: 201px; }
.fo { width: 14px; height: 14px; flex: none; margin-left: 1px; }
.g { width: 19px; height: 16px; flex: none; display: grid; place-items: center; background-repeat: no-repeat; }
.g.h { background-image: repeating-linear-gradient(90deg, #808080 0 1px, transparent 1px 2px); background-size: 10px 1px; background-position: 9px 8px; }
.g.v { background-image: repeating-linear-gradient(#808080 0 1px, transparent 1px 2px); background-size: 1px 16px; background-position: 9px 0; }
.g.h.v { background-image: repeating-linear-gradient(90deg, #808080 0 1px, transparent 1px 2px), repeating-linear-gradient(#808080 0 1px, transparent 1px 2px); background-size: 10px 1px, 1px 16px; background-position: 9px 8px, 9px 0; }
.g.h.up { background-size: 10px 1px, 1px 8px; }
.g b { width: 9px; height: 9px; border: 1px solid #919191; border-radius: 1px; background: linear-gradient(#fff, #e4e4e4); font: bold 9px/7px "Liberation Sans", sans-serif; text-align: center; color: #34508c; }
.scroll { width: 15px; flex: none; display: flex; flex-direction: column; align-items: center; background: #f0f0f0; padding: 9px 0 8px; }
.scroll .au { border: solid transparent; border-width: 0 4px 4px; border-bottom-color: #555; }
.scroll .ad { border: solid transparent; border-width: 4px 4px 0; border-top-color: #555; }
.thumb { width: 15px; flex: 1; margin: 6px 0 134px; border: 1px solid #979797; border-radius: 2px; background: repeating-linear-gradient(#555 0 1px, transparent 1px 3px) center / 7px 8px no-repeat, linear-gradient(90deg, #fafafa, #ccc); }

.files { margin: 1px 0 1px 4px; border: 1px solid #828790; background: #fff; }
.tabs { display: flex; align-items: flex-end; gap: 4px; height: 23px; flex: none; padding-left: 9px; border-bottom: 1px solid #a0a8b4; background: linear-gradient(#fafafa, #c3d2e3); font: bold 11px/14px "Noto Sans", sans-serif; }
.tab { height: 21px; padding: 0 10px; border: 1px solid #a0a8b4; border-bottom: 0; background: linear-gradient(#f4f6f9, #c8d5e4); }
.tab.on { background: #fff; border-color: #fff; }
.tabtools { flex: 1; display: flex; justify-content: flex-end; align-items: center; gap: 16px; height: 21px; padding-right: 11px; }
.tl { border: solid transparent; border-width: 4px 4px 4px 0; border-right-color: #000; }
.tr { border: solid transparent; border-width: 4px 0 4px 4px; border-left-color: #000; }
.td { border: solid transparent; border-width: 4px 4px 0; border-top-color: #000; margin-right: -8px; }
.thumbs { display: grid; grid-template-columns: repeat(auto-fill, 98px); gap: 15px 4px; padding: 9px 0 0 2px; font: 11px/13px "Noto Sans", sans-serif; }
.thumbs li { display: flex; flex-direction: column; align-items: center; height: 85px; white-space: nowrap; }
.thumbs span { width: 98px; padding: 1px 0; text-align: center; }
.pic { width: 72px; height: 48px; margin: 3px 3px 6px; background: #000; outline: 1px solid #c8c8c8; outline-offset: -1px; flex: none; }
.sel .pic { outline: 3px solid #3399ff; outline-offset: 0; }
.sel span { background: #3399ff; color: #fff; }
.mi { font: bold 13px "Liberation Sans", sans-serif; fill: #fff; text-anchor: middle; }

.right { margin-left: 5px; padding: 1px 0 5px; border-left: 1px solid #a0a0a0; }
.preview { margin: 5px 0 0 5px; width: 211px; height: 193px; flex: none; background: #000; }
.phead.second { margin-top: 10px; justify-content: flex-end; }
.second .grip { margin-right: auto; }
.props { flex: 1; margin: 32px 0 4px 5px; width: 211px; border: 1px solid #a0a0a0; background: #fff; }
.props i { display: block; height: 17px; border-bottom: 1px solid #f0f4fb; }
.props i:first-child { background: #f3f6fc; }
.desc { margin-left: 5px; width: 211px; height: 59px; flex: none; padding: 18px 5px 0; border: 1px solid #a0a0a0; font: 11px/13px "Noto Sans", sans-serif; white-space: nowrap; }

.side { display: flex; flex-direction: column; gap: 11px; align-items: center; padding-top: 8px; background: #fbfbfb; font: bold 11px/16px "Noto Sans", sans-serif; }
.side button { writing-mode: vertical-rl; }

.small { font: italic 600 19px "Open Sans", sans-serif; fill: #f00; }
.big { font: italic 300 52px "Open Sans", sans-serif; fill: #000; }
.code { font: 33px "Liberation Sans", sans-serif; text-anchor: middle; stroke: #000; stroke-width: 1px; }
.arrow { fill: #c00000; filter: url(#shadow); }
```
